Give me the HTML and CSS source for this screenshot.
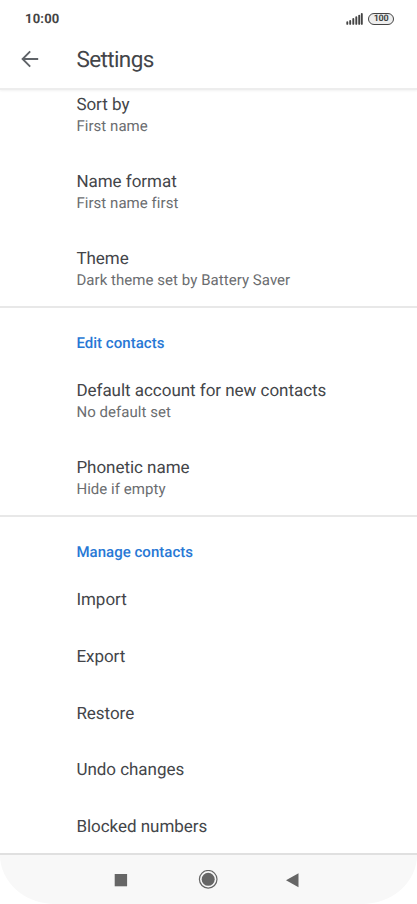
FILE: index.html
```html
<!DOCTYPE html>
<html lang="en">
<head>
<meta charset="utf-8">
<title>Settings</title>
<link rel="stylesheet" href="styles.css">
</head>
<body>
<div class="screen">
  <header class="top">
    <div class="status">
      <span class="clock">10:00</span>
      <div class="indicators">
        <svg class="signal" width="17" height="12" viewBox="0 0 17 12"><path d="M1.3 9.3v1.6M4.2 8v2.9M7.3 6v4.9M10.3 4.3v6.6M13.2 2.6v8.3M15.8 1v9.9" stroke="#444" stroke-width="1.9" stroke-linecap="round"/></svg>
        <span class="battery">100</span>
      </div>
    </div>
    <div class="bar">
      <svg class="back" width="18" height="18" viewBox="0 0 18 18"><path d="M17.2 9H2M9.2 1.4L1.6 9L9.2 16.6" fill="none" stroke="#5f6368" stroke-width="1.9"/></svg>
      <h1>Settings</h1>
    </div>
  </header>
  <main>
    <section class="group">
      <div class="item"><p class="title">Sort by</p><p class="sub">First name</p></div>
      <div class="item"><p class="title">Name format</p><p class="sub">First name first</p></div>
      <div class="item"><p class="title">Theme</p><p class="sub">Dark theme set by Battery Saver</p></div>
    </section>
    <section class="group">
      <h2>Edit contacts</h2>
      <div class="item"><p class="title">Default account for new contacts</p><p class="sub">No default set</p></div>
      <div class="item"><p class="title">Phonetic name</p><p class="sub">Hide if empty</p></div>
    </section>
    <section class="group">
      <h2>Manage contacts</h2>
      <div class="item single"><p class="title">Import</p></div>
      <div class="item single"><p class="title">Export</p></div>
      <div class="item single"><p class="title">Restore</p></div>
      <div class="item single"><p class="title">Undo changes</p></div>
      <div class="item single"><p class="title">Blocked numbers</p></div>
    </section>
  </main>
  <nav>
    <svg width="20" height="20" viewBox="0 0 20 20"><path d="M2.7 4h12.4v12.3H2.7z" fill="#666"/></svg>
    <svg width="20" height="20" viewBox="0 0 20 20"><circle cx="10.2" cy="9.3" r="8.8" fill="none" stroke="#666" stroke-width="1.2"/><circle cx="10.2" cy="9.3" r="6.5" fill="#666"/></svg>
    <svg width="20" height="20" viewBox="0 0 20 20"><path d="M2 10.2L14.5 3.2v14z" fill="#666"/></svg>
  </nav>
</div>
</body>
</html>
```
FILE: styles.css
```css
* { box-sizing: border-box; margin: 0; padding: 0; }
body { background: #fff; font-family: Roboto, sans-serif; color: #434549; text-rendering: geometricPrecision; }
.screen { height: 904px; display: flex; flex-direction: column; overflow: hidden; }
.top { height: 90px; flex: none; border-bottom: 2px solid #ededed; box-shadow: 0 1px 2px #f2f2f2; }
.status { height: 36px; padding: 1px 23px 0 25px; display: flex; align-items: center; justify-content: space-between; }
.clock { padding-top: 1px; font-size: 13px; font-weight: 700; letter-spacing: .2px; color: #444; }
.indicators { display: flex; align-items: center; gap: 5px; }
.battery { width: 26px; height: 12px; border: 1.5px solid #444; border-radius: 6px; background: #eee; font-size: 9px; font-weight: 700; letter-spacing: -.3px; line-height: 11px; text-align: center; color: #444; }
.bar { height: 46px; display: flex; align-items: center; padding-left: 21px; }
.back { margin-right: 37.4px; }
h1 { padding-top: 1px; font-size: 22.5px; font-weight: 400; letter-spacing: -.6px; }
main { flex: 1; overflow: hidden; }
.group { border-bottom: 2px solid #e8e8e8; }
.group:first-child { margin-top: -13px; }
.group:last-child { border-bottom: 0; }
.item { height: 77px; padding: 17px 0 0 76.4px; }
.item:last-child { height: 75px; }
.title { font-size: 17px; line-height: 22px; letter-spacing: -.03px; }
.sub { font-size: 15px; line-height: 21px; letter-spacing: .05px; color: #6b6d70; }
h2 { height: 55px; padding: 25px 0 0 76.4px; font-size: 15px; line-height: 20px; font-weight: 500; letter-spacing: .03px; color: #2878d5; }
.item.single { height: 56.8px; }
.item.single:last-child { height: 54px; }
nav { height: 51px; flex: none; display: flex; justify-content: center; align-items: center; gap: 67px; background: #f8f8f8; border-top: 2px solid #e0e0e0; border-radius: 0 0 55px 55px / 0 0 49px 49px; }
nav svg { margin-left: -1px; }
```
